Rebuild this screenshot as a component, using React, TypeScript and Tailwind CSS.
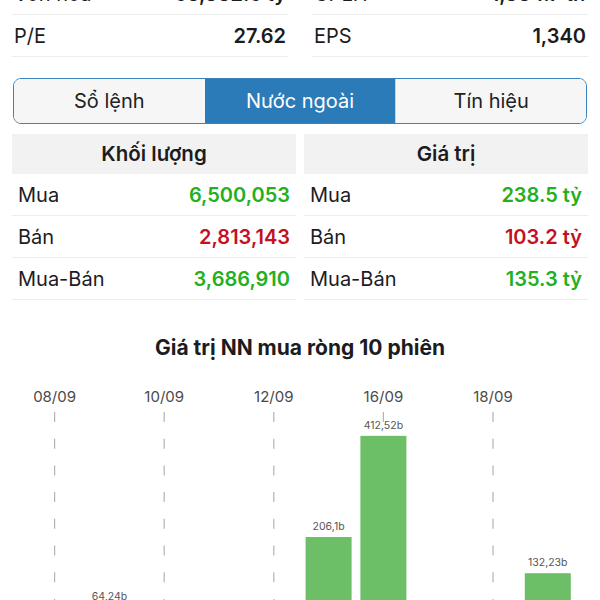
import React from 'react';

const stats = [
  { label: 'Vốn hoá', value: '56,882.5 tỷ' },
  { label: 'CPLH', value: '1,884.7 tr.' },
  { label: 'P/E', value: '27.62' },
  { label: 'EPS', value: '1,340' },
];

const volumeRows = [
  { label: 'Mua', value: '6,500,053', up: true },
  { label: 'Bán', value: '2,813,143', up: false },
  { label: 'Mua-Bán', value: '3,686,910', up: true },
];

const valueRows = [
  { label: 'Mua', value: '238.5 tỷ', up: true },
  { label: 'Bán', value: '103.2 tỷ', up: false },
  { label: 'Mua-Bán', value: '135.3 tỷ', up: true },
];

const tabs = ['Sổ lệnh', 'Nước ngoài', 'Tín hiệu'];

// slot centers of the 10 sessions
const step = 54.8;
const cx = (i: number) => 54.6 + step * i;
const dates = [
  { i: 0, label: '08/09' },
  { i: 2, label: '10/09' },
  { i: 4, label: '12/09' },
  { i: 6, label: '16/09' },
  { i: 8, label: '18/09' },
];
const bars = [
  { i: 1, v: 64.24, label: '64,24b' },
  { i: 5, v: 206.1, label: '206,1b' },
  { i: 6, v: 412.52, label: '412,52b' },
  { i: 9, v: 132.23, label: '132,23b' },
];
const base = 258;
const scale = 0.49;

function Table({ title, rows }: { title: string; rows: typeof volumeRows }) {
  return (
    <div className="flex flex-col">
      <div className="h-[40px] bg-[#f2f2f2] flex items-center justify-center font-semibold text-[20.5px]">
        {title}
      </div>
      {rows.map((r) => (
        <div key={r.label} className="h-[42px] flex items-center justify-between px-[6px] border-b border-[#ededed]">
          <span>{r.label}</span>
          <span className={`font-semibold ${r.up ? 'text-[#22b022]' : 'text-[#c1121f]'}`}>{r.value}</span>
        </div>
      ))}
    </div>
  );
}

export default function App() {
  return (
    <div className="w-[600px] h-[600px] overflow-hidden bg-white">
      <div className="-mt-[27px] font-['Inter','Noto_Sans',sans-serif] text-[20px] text-[#1c1c1e]">
        {/* Stats */}
        <div className="grid grid-cols-2 gap-x-[24px] px-3">
          {stats.map((s) => (
            <div key={s.label} className="h-[42px] flex items-center justify-between px-[2px] border-b border-[#ededed]">
              <span>{s.label}</span>
              <span className="font-semibold">{s.value}</span>
            </div>
          ))}
        </div>

        {/* Tabs */}
        <div className="mx-[13px] mt-[21px] h-[46px] grid grid-cols-3 border-[1.5px] border-[#3a83bd] rounded-[8px] overflow-hidden">
          {tabs.map((t, i) => (
            <div
              key={t}
              className={`flex items-center justify-center ${i === 1 ? 'bg-[#2c7bb9] text-white' : 'bg-[#f6f6f6] text-[#222]'} ${i === 2 ? 'border-l border-[#d0d0d0]' : ''}`}
            >
              {t}
            </div>
          ))}
        </div>

        {/* Foreign trading */}
        <div className="mt-[10px] grid grid-cols-2 gap-x-[8px] px-3">
          <Table title="Khối lượng" rows={volumeRows} />
          <Table title="Giá trị" rows={valueRows} />
        </div>

        {/* Chart */}
        <div className="mt-[35px] h-[26px] leading-[26px] text-center font-bold text-[21px]">
          Giá trị NN mua ròng 10 phiên
        </div>
        <svg className="block mt-[19px]" width={600} height={270} viewBox="0 0 600 270">
          {dates.map((d) => (
            <g key={d.label}>
              <text x={cx(d.i)} y={22} textAnchor="middle" fontSize={15} fill="#4a4a4a" fontFamily="Inter, sans-serif">
                {d.label}
              </text>
              <line x1={cx(d.i)} y1={32} x2={cx(d.i)} y2={270} stroke="#b3b3b3" strokeWidth={1.2} strokeDasharray="10 16.7" />
            </g>
          ))}
          {bars.map((b) => {
            const h = b.v * scale;
            return (
              <g key={b.label}>
                <rect x={cx(b.i) - 23} y={base - h} width={46} height={h} fill="#6dbf67" />
                <text x={cx(b.i)} y={base - h - 7} textAnchor="middle" fontSize={10.5} fill="#555" fontFamily="Inter, sans-serif">
                  {b.label}
                </text>
              </g>
            );
          })}
        </svg>
      </div>
    </div>
  );
}
